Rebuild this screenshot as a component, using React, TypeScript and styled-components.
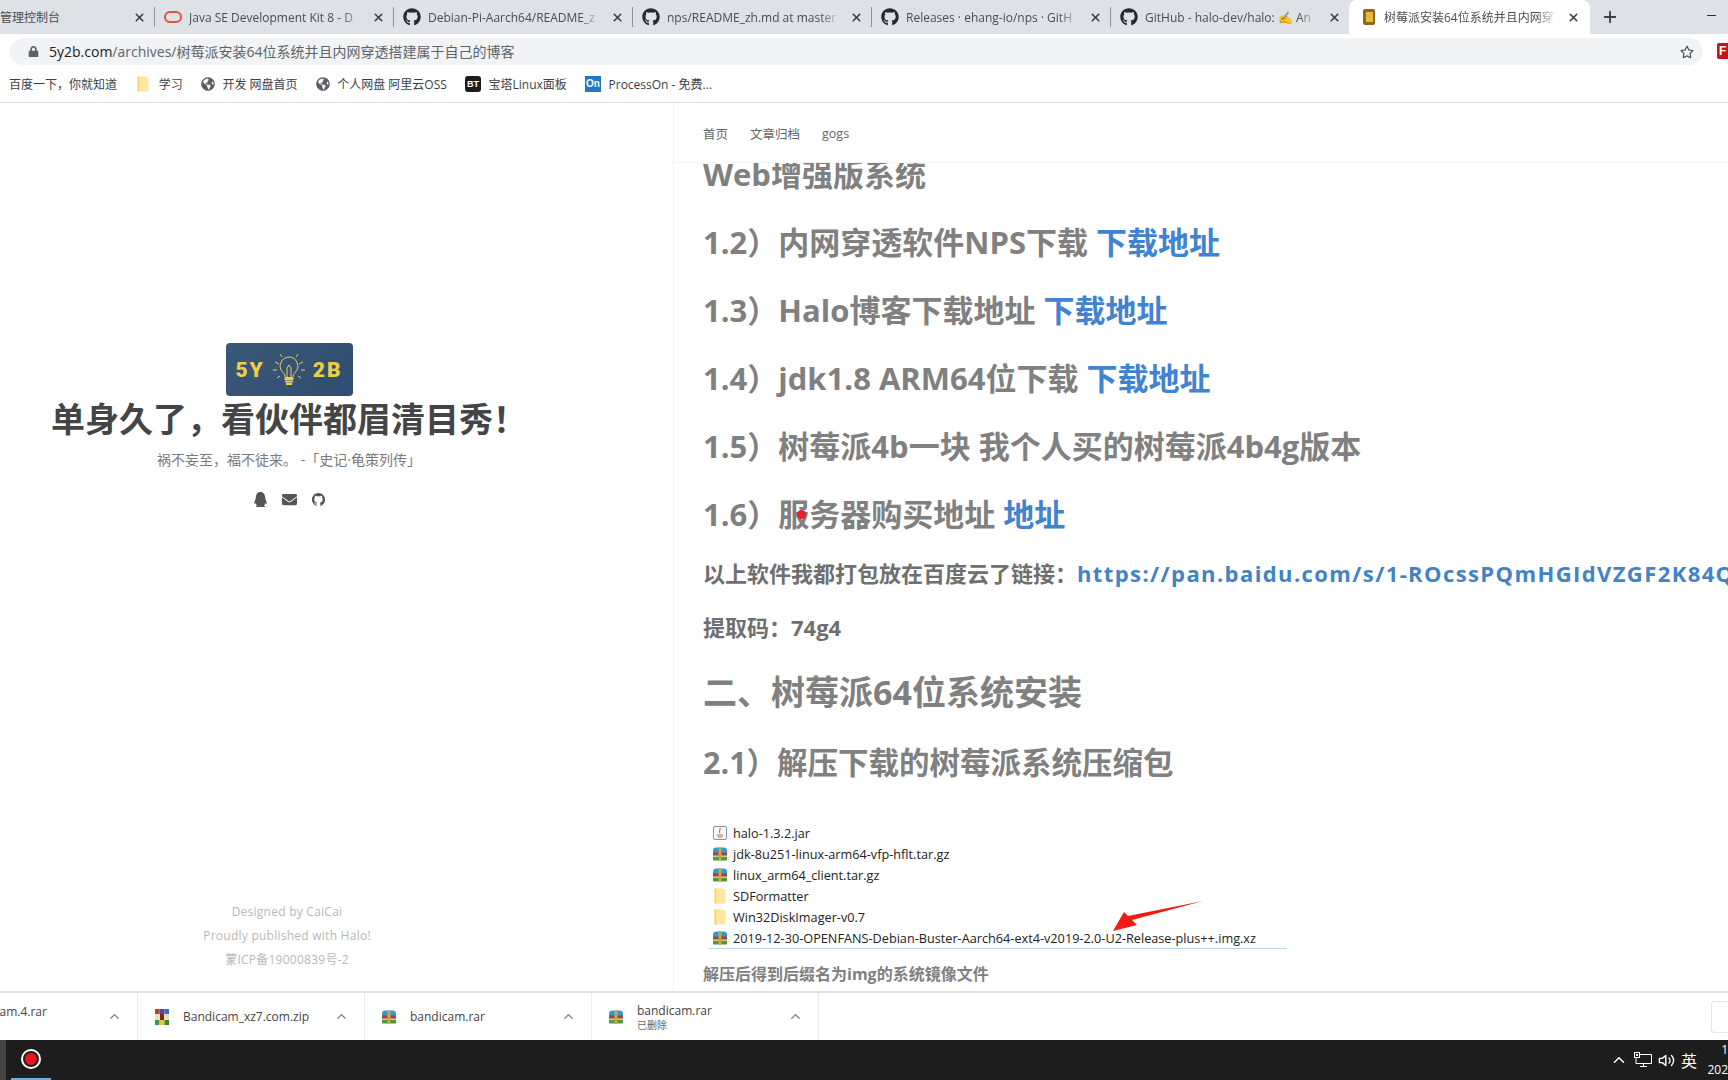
import React from 'react'
import styled, { createGlobalStyle } from 'styled-components'
import { FaGithub, FaQq, FaEnvelope, FaGlobeAmericas, FaLock, FaRegStar } from 'react-icons/fa'
import { AiOutlineGithub } from 'react-icons/ai'
import { FiX, FiPlus, FiChevronUp, FiVolume2 } from 'react-icons/fi'

const GlobalStyle = createGlobalStyle`
  html, body {
    margin: 0;
    padding: 0;
    width: 1728px;
    height: 1080px;
    overflow: hidden;
    background: #fff;
    font-family: "Open Sans", "Noto Sans CJK SC", sans-serif;
  }
`

const tabs = [
  { title: 'Java SE Development Kit 8 - D', icon: 'oracle' },
  { title: 'Debian-Pi-Aarch64/README_z', icon: 'github' },
  { title: 'nps/README_zh.md at master', icon: 'github' },
  { title: 'Releases · ehang-io/nps · GitH', icon: 'github' },
  { title: 'GitHub - halo-dev/halo: ✍ An', icon: 'github' }
]

const bookmarks = [
  { label: '百度一下，你就知道', icon: null },
  { label: '学习', icon: 'folder' },
  { label: '开发 网盘首页', icon: 'globe' },
  { label: '个人网盘 阿里云OSS', icon: 'globe' },
  { label: '宝塔Linux面板', icon: 'bt' },
  { label: 'ProcessOn - 免费...', icon: 'on' }
]

const files = [
  { name: 'halo-1.3.2.jar', icon: 'jar' },
  { name: 'jdk-8u251-linux-arm64-vfp-hflt.tar.gz', icon: 'rar' },
  { name: 'linux_arm64_client.tar.gz', icon: 'rar' },
  { name: 'SDFormatter', icon: 'folder' },
  { name: 'Win32DiskImager-v0.7', icon: 'folder' },
  { name: '2019-12-30-OPENFANS-Debian-Buster-Aarch64-ext4-v2019-2.0-U2-Release-plus++.img.xz', icon: 'rar' }
]

const RarIcon = ({ size = 16 }: { size?: number }) => (
  <svg width={size} height={size} viewBox="0 0 16 16">
    <path d="M1 7V4.500C1 2.500 2.500 1.500 4 1.500h8c1.500 0 3 1 3 3V7z" fill="#2f9ad6" />
    <rect x="1" y="6.500" width="14" height="3.500" fill="#a8433a" />
    <rect x="1" y="10.500" width="14" height="4" rx="0.800" fill="#4c9a3a" />
    <rect x="1" y="9.500" width="14" height="1.200" fill="#e9cf86" />
    <rect x="6.500" y="1.500" width="3" height="13" fill="#caa44a" />
  </svg>
)

const FolderIcon = ({ size = 16 }: { size?: number }) => (
  <svg width={size} height={size} viewBox="0 0 16 16">
    <path d="M2.500 0.500h9l2 2v13h-11z" fill="#fce6a0" />
    <path d="M2.500 0.500h2v15h-2z" fill="#f6d679" />
  </svg>
)

const JarIcon = () => (
  <svg width="16" height="16" viewBox="0 0 16 16">
    <rect x="1.500" y="1.500" width="13" height="13" rx="1.500" fill="#f4f7fb" stroke="#7f93ad" />
    <path d="M8 3c1 2-2 3 0 5M5 10h6M5.500 12h5" fill="none" stroke="#d2691e" strokeWidth="1.100" />
  </svg>
)

const ZipIcon = () => (
  <svg width="16" height="18" viewBox="0 0 16 18">
    <rect x="1" y="1" width="4.500" height="5" fill="#c13a3a" />
    <rect x="5.500" y="1" width="5" height="5" fill="#6a3a96" />
    <rect x="10.500" y="1" width="4.500" height="5" fill="#3a6fb6" />
    <rect x="1" y="6" width="14" height="6" fill="#e9dfc0" />
    <rect x="6" y="6" width="4" height="6" fill="#7a2a2a" />
    <rect x="1" y="12" width="4.500" height="5" fill="#3d9a4a" />
    <rect x="5.500" y="12" width="5" height="5" fill="#e8c23a" />
    <rect x="10.500" y="12" width="4.500" height="5" fill="#2f8a3c" />
  </svg>
)

const BulbIcon = () => (
  <svg width="34" height="36" viewBox="0 0 34 36" fill="none" stroke="#e8cf6a" strokeWidth="1">
    <path d="M17 5a9 9 0 0 0-6 15.500c1.500 1.600 2 3 2 5h8c0-2 .5-3.400 2-5A9 9 0 0 0 17 5z" />
    <path d="M15 25v-9l2-3 2 3v9" />
    <path d="M12.500 27h9M13 29.500h8M14 32h6" stroke="#f0d040" strokeWidth="2" />
    <path d="M3 10l4 2M31 10l-4 2M1 18h4M33 18h-4M8 2l2 3M26 2l-2 3M5 26l3-2M29 26l-3-2" />
  </svg>
)

const TabIcon = ({ kind }: { kind: string }) =>
  kind === 'oracle' ? (
    <svg width="18" height="12" viewBox="0 0 18 12">
      <rect x="1" y="1" width="16" height="10" rx="5" fill="none" stroke="#e2503f" strokeWidth="2" />
    </svg>
  ) : (
    <FaGithub size={18} color="#24292e" />
  )

const BookmarkIcon = ({ kind }: { kind: string | null }) => {
  if (kind === 'folder') return <FolderIcon />
  if (kind === 'globe') return <FaGlobeAmericas size={14} color="#5a5f66" />
  if (kind === 'bt') return <BadgeBt>BT</BadgeBt>
  if (kind === 'on') return <BadgeOn>On</BadgeOn>
  return null
}

const FileIcon = ({ kind }: { kind: string }) => {
  if (kind === 'jar') return <JarIcon />
  if (kind === 'folder') return <FolderIcon />
  return <RarIcon />
}

const NetworkIcon = () => (
  <svg width="18" height="16" viewBox="0 0 18 16" fill="none" stroke="#fff" strokeWidth="1">
    <path d="M5 2.500h12.500v9H2V6M9.500 11.500v3M6 14.500h7" />
    <rect x="0.500" y="0.500" width="5" height="5" fill="#1d1d1d" />
    <rect x="2" y="2" width="2" height="2" fill="#fff" stroke="none" />
  </svg>
)

const App = () => {
  return (
    <Screen>
      <GlobalStyle />
      <TabStrip>
        <FirstTab>
          <FirstTabTitle>管理控制台</FirstTabTitle>
          <TabClose><FiX size={13} strokeWidth={3} /></TabClose>
        </FirstTab>
        {tabs.map((tab) => (
          <Tab key={tab.title}>
            <TabIcon kind={tab.icon} />
            <TabTitle>{tab.title}</TabTitle>
            <TabClose><FiX size={13} strokeWidth={3} /></TabClose>
          </Tab>
        ))}
        <ActiveTab>
          <FolderTabIcon>
            <svg width="14" height="18" viewBox="0 0 14 18">
              <rect x="1" y="1" width="12" height="16" rx="2" fill="#8a6a1e" />
              <rect x="4" y="4" width="7" height="10" fill="#e9b93c" />
            </svg>
          </FolderTabIcon>
          <TabTitle>树莓派安装64位系统并且内网穿</TabTitle>
          <TabClose><FiX size={13} strokeWidth={3} /></TabClose>
        </ActiveTab>
        <NewTab><FiPlus size={18} strokeWidth={2.4} /></NewTab>
        <Minimize />
      </TabStrip>

      <AddressRow>
        <AddressInput>
          <FaLock size={11} color="#5f6368" />
          <Url><strong>5y2b.com</strong>/archives/树莓派安装64位系统并且内网穿透搭建属于自己的博客</Url>
          <FaRegStar size={14} color="#4a4d52" />
        </AddressInput>
        <ExtensionBadge>F</ExtensionBadge>
      </AddressRow>

      <BookmarkBar>
        {bookmarks.map((item) => (
          <Bookmark key={item.label}>
            <BookmarkIcon kind={item.icon} />
            <span>{item.label}</span>
          </Bookmark>
        ))}
      </BookmarkBar>

      <Page>
        <Sidebar>
          <SidebarMain>
            <Logo>
              <LogoText>5Y</LogoText>
              <BulbIcon />
              <LogoText>2B</LogoText>
            </Logo>
            <BlogTitle>单身久了，看伙伴都眉清目秀！</BlogTitle>
            <Motto>祸不妄至，福不徒来。 -「史记·龟策列传」</Motto>
            <SocialRow>
              <FaQq size={15} />
              <FaEnvelope size={15} />
              <AiOutlineGithub size={15} />
            </SocialRow>
          </SidebarMain>
          <SidebarFooter>
            <div>Designed by CaiCai</div>
            <div>Proudly published with Halo!</div>
            <div>蒙ICP备19000839号-2</div>
          </SidebarFooter>
        </Sidebar>

        <Main>
          <Nav>
            <NavLink>首页</NavLink>
            <NavLink>文章归档</NavLink>
            <NavLink>gogs</NavLink>
          </Nav>
          <Article>
            <ClippedHeading>Web增强版系统</ClippedHeading>
            <Heading>1.2）内网穿透软件NPS下载 <Link>下载地址</Link></Heading>
            <Heading>1.3）Halo博客下载地址 <Link>下载地址</Link></Heading>
            <Heading>1.4）jdk1.8 ARM64位下载 <Link>下载地址</Link></Heading>
            <Heading>1.5）树莓派4b一块 我个人买的树莓派4b4g版本</Heading>
            <Heading>1.6）服务器购买地址 <Link>地址</Link></Heading>
            <LeadPara>以上软件我都打包放在百度云了链接：<ParaLink>https://pan.baidu.com/s/1-ROcssPQmHGIdVZGF2K84Q</ParaLink></LeadPara>
            <Para>提取码：74g4</Para>
            <SectionTitle>二、树莓派64位系统安装</SectionTitle>
            <SubHeading>2.1）解压下载的树莓派系统压缩包</SubHeading>
            <FileShot>
              {files.map((file) => (
                <FileRow key={file.name}>
                  <FileIcon kind={file.icon} />
                  <span>{file.name}</span>
                </FileRow>
              ))}
              <Arrow width="100" height="34" viewBox="0 0 100 34">
                <path d="M91 1 L20 20 L25 25 L1 31 L12 12 L16 16 Z" fill="#f01c14" />
              </Arrow>
            </FileShot>
            <Caption>解压后得到后缀名为img的系统镜像文件</Caption>
          </Article>
          <CursorDot />
        </Main>
      </Page>

      <DownloadBar>
        <FirstDownload>
          <DownloadName>bandicam.4.rar</DownloadName>
          <Chevron><FiChevronUp size={15} /></Chevron>
        </FirstDownload>
        <Download>
          <ZipIcon />
          <DownloadName>Bandicam_xz7.com.zip</DownloadName>
          <Chevron><FiChevronUp size={15} /></Chevron>
        </Download>
        <Download>
          <RarIcon />
          <DownloadName>bandicam.rar</DownloadName>
          <Chevron><FiChevronUp size={15} /></Chevron>
        </Download>
        <Download>
          <RarIcon />
          <DownloadName>
            bandicam.rar
            <DownloadNote>已删除</DownloadNote>
          </DownloadName>
          <Chevron><FiChevronUp size={15} /></Chevron>
        </Download>
        <ShowAll />
      </DownloadBar>

      <Taskbar>
        <TaskSliver />
        <RecordApp>
          <RecordDot />
        </RecordApp>
        <Tray>
          <FiChevronUp size={18} />
          <NetworkIcon />
          <FiVolume2 size={17} />
          <ImeLabel>英</ImeLabel>
          <Clock>
            <span>1</span>
            <span>202</span>
          </Clock>
        </Tray>
      </Taskbar>
    </Screen>
  )
}

const Screen = styled.div`
  width: 1728px;
  height: 1080px;
  overflow: hidden;
  display: flex;
  flex-direction: column;
`
const TabStrip = styled.div`
  height: 34px;
  background: #dee1e6;
  display: flex;
  align-items: center;
  font-size: 12px;
  color: #4a4d52;
`
const Tab = styled.div`
  width: 239px;
  height: 34px;
  flex: none;
  box-sizing: border-box;
  padding: 0 7px 0 10px;
  display: flex;
  align-items: center;
  gap: 7px;
  position: relative;
  &::before {
    content: '';
    position: absolute;
    left: 0;
    top: 7px;
    bottom: 7px;
    width: 1px;
    background: #8f9297;
  }
`
const FirstTab = styled(Tab)`
  width: 154px;
  padding-left: 0;
  &::before {
    display: none;
  }
`
const FirstTabTitle = styled.span`
  flex: 1;
  white-space: nowrap;
`
const ActiveTab = styled(Tab)`
  width: 241px;
  background: #fff;
  border-radius: 8px 8px 0 0;
  padding: 0 9px 0 13px;
  gap: 8px;
  &::before {
    display: none;
  }
`
const TabTitle = styled.span`
  flex: 1;
  min-width: 0;
  white-space: nowrap;
  -webkit-mask-image: linear-gradient(to right, #000 88%, transparent 100%);
  mask-image: linear-gradient(to right, #000 88%, transparent 100%);
`
const TabClose = styled.span`
  flex: none;
  width: 16px;
  display: flex;
  justify-content: center;
  color: #3c3f44;
`
const FolderTabIcon = styled.span`
  display: flex;
`
const NewTab = styled.span`
  width: 40px;
  display: flex;
  justify-content: center;
  color: #3c3f44;
`
const Minimize = styled.span`
  width: 9px;
  height: 1px;
  margin-left: 77px;
  margin-top: -4px;
  background: #333;
`
const AddressRow = styled.div`
  height: 31px;
  display: flex;
  align-items: flex-start;
  background: #fff;
  padding-top: 4px;
  box-sizing: border-box;
  gap: 14px;
`
const AddressInput = styled.div`
  width: 1693px;
  margin-left: 10px;
  height: 27px;
  flex: none;
  box-sizing: border-box;
  padding: 0 9px 0 18px;
  background: #f1f3f4;
  border-radius: 14px;
  display: flex;
  align-items: center;
  gap: 10px;
  font-size: 14px;
  color: #5f6368;
`
const Url = styled.span`
  flex: 1;
  margin-top: -2px;
  white-space: nowrap;
  strong {
    font-weight: 400;
    color: #202124;
  }
`
const ExtensionBadge = styled.span`
  flex: none;
  width: 16px;
  height: 16px;
  margin-top: 5px;
  background: #cc1018;
  border-radius: 2px;
  color: #fff;
  font: 700 12px/16px "Liberation Sans", sans-serif;
  padding-left: 2px;
  box-sizing: border-box;
`
const BookmarkBar = styled.div`
  height: 38px;
  box-sizing: border-box;
  padding-left: 9px;
  border-bottom: 1px solid #dcdcdc;
  display: flex;
  align-items: center;
  gap: 18.2px;
  font-size: 12px;
  color: #3c3f44;
`
const Bookmark = styled.div`
  display: flex;
  align-items: center;
  gap: 7.5px;
  white-space: nowrap;
`
const BadgeBt = styled.span`
  width: 16px;
  height: 16px;
  border-radius: 3px;
  background: #1c1c1c;
  color: #fff;
  font: 700 9px/16px "Liberation Sans", sans-serif;
  text-align: center;
`
const BadgeOn = styled.span`
  width: 16px;
  height: 16px;
  background: #1f78c8;
  color: #fff;
  font: 700 10px/16px "Liberation Sans", sans-serif;
  text-align: center;
`
const Page = styled.div`
  flex: 1;
  min-height: 0;
  display: flex;
  background: #fff;
`
const Sidebar = styled.aside`
  width: 674px;
  flex: none;
  box-sizing: border-box;
  border-right: 1px solid #f3f3f3;
  padding: 240px 0 0;
  display: flex;
  flex-direction: column;
  justify-content: space-between;
`
const SidebarMain = styled.div`
  width: 578px;
  display: flex;
  flex-direction: column;
  align-items: center;
`
const Logo = styled.div`
  width: 127px;
  height: 53px;
  box-sizing: border-box;
  border-radius: 4px;
  background: linear-gradient(135deg, #3c5878, #2f4d70);
  display: flex;
  align-items: center;
  justify-content: center;
  gap: 7px;
`
const LogoText = styled.span`
  font: 900 21px "Roboto", sans-serif;
  color: #eccf45;
  letter-spacing: 2px;
`
const BlogTitle = styled.h1`
  margin: 0;
  font-size: 34px;
  line-height: 46px;
  font-weight: 700;
  color: #454545;
  white-space: nowrap;
`
const Motto = styled.p`
  margin: 8px 0 0;
  font-size: 14px;
  line-height: 20px;
  color: #7a7a7a;
`
const SocialRow = styled.div`
  margin-top: 22px;
  display: flex;
  align-items: center;
  gap: 14px;
  color: #555;
`
const SidebarFooter = styled.footer`
  width: 574px;
  padding-bottom: 19px;
  text-align: center;
  font-size: 12px;
  line-height: 24px;
  letter-spacing: 0.25px;
  color: #b8b8b8;
`
const Main = styled.main`
  flex: 1;
  min-width: 0;
  position: relative;
  display: flex;
  flex-direction: column;
  overflow: hidden;
`
const Nav = styled.nav`
  height: 60px;
  flex: none;
  box-sizing: border-box;
  padding: 2px 0 0 29px;
  border-bottom: 1px solid #f5f5f5;
  display: flex;
  align-items: center;
  gap: 22px;
`
const NavLink = styled.a`
  font-size: 12.5px;
  color: #666;
`
const Article = styled.article`
  flex: 1;
  min-height: 0;
  overflow: hidden;
  padding-left: 29px;
  color: #808080;
  font-weight: 700;
  white-space: nowrap;
`
const Heading = styled.h3`
  margin: 0;
  font-size: 31px;
  line-height: 68px;
  font-weight: 700;
`
const ClippedHeading = styled(Heading)`
  margin-top: -23px;
`
const Link = styled.a`
  color: #4183d0;
`
const Para = styled.p`
  margin: 0;
  font-size: 22px;
  line-height: 54px;
  color: #6f6f6f;
`
const LeadPara = styled(Para)`
  margin-top: -2px;
`
const ParaLink = styled.a`
  color: #4183c4;
  letter-spacing: 1.4px;
`
const SectionTitle = styled.h2`
  margin: 6px 0 0;
  font-size: 34px;
  line-height: 64px;
  font-weight: 700;
`
const SubHeading = styled(Heading)`
  margin-top: 4px;
  font-size: 30.5px;
`
const FileShot = styled.div`
  position: relative;
  width: 578px;
  margin: 26px 0 0 6px;
  border-bottom: 1px solid #b9d8ea;
  font-size: 12.7px;
  font-weight: 400;
  color: #222;
`
const FileRow = styled.div`
  height: 21px;
  display: flex;
  align-items: center;
  gap: 5px;
  padding-left: 3px;
`
const Arrow = styled.svg`
  position: absolute;
  left: 403px;
  top: 78px;
`
const Caption = styled.p`
  margin: 13px 0 0;
  font-size: 16px;
  line-height: 24px;
`
const CursorDot = styled.span`
  position: absolute;
  left: 123px;
  top: 407px;
  width: 9px;
  height: 9px;
  border-radius: 50%;
  background: #e8212a;
`
const DownloadBar = styled.div`
  height: 49px;
  flex: none;
  box-sizing: border-box;
  border-top: 2px solid #e2e2e2;
  background: #fff;
  display: flex;
  align-items: center;
  font-size: 12px;
  color: #444;
`
const Download = styled.div`
  width: 227px;
  height: 47px;
  flex: none;
  box-sizing: border-box;
  padding: 0 15px 0 16px;
  border-right: 1px solid #ececec;
  display: flex;
  align-items: center;
  gap: 13px;
`
const FirstDownload = styled(Download)`
  width: 138px;
  padding-left: 0;
  padding-right: 15px;
`
const DownloadName = styled.div`
  flex: 1;
  min-width: 0;
  white-space: nowrap;
  ${FirstDownload} & {
    margin-left: -38px;
    margin-top: -10px;
  }
`
const DownloadNote = styled.div`
  font-size: 10px;
  line-height: 12px;
  color: #666;
`
const Chevron = styled.span`
  flex: none;
  display: flex;
  color: #777;
`
const ShowAll = styled.span`
  margin-left: auto;
  width: 16px;
  height: 30px;
  border: 1px solid #e5e5e5;
  border-right: none;
  border-radius: 3px 0 0 3px;
`
const Taskbar = styled.div`
  height: 40px;
  flex: none;
  background: #1d1d1d;
  display: flex;
  align-items: stretch;
  color: #fff;
`
const TaskSliver = styled.span`
  width: 6px;
  background: #454545;
`
const RecordApp = styled.div`
  width: 40px;
  margin-left: 5px;
  box-sizing: border-box;
  border-bottom: 2px solid #76a9d8;
  display: flex;
  align-items: center;
  justify-content: center;
`
const RecordDot = styled.span`
  width: 12px;
  height: 12px;
  border-radius: 50%;
  background: #e8161c;
  border: 2px solid #1d1d1d;
  box-shadow: 0 0 0 2px #fff;
`
const Tray = styled.div`
  margin-left: auto;
  display: flex;
  align-items: center;
  gap: 6px;
`
const ImeLabel = styled.span`
  font-size: 16px;
`
const Clock = styled.div`
  width: 20px;
  margin-left: 5px;
  display: flex;
  flex-direction: column;
  align-items: flex-end;
  font-size: 12px;
  line-height: 20px;
  white-space: nowrap;
`

export default App
